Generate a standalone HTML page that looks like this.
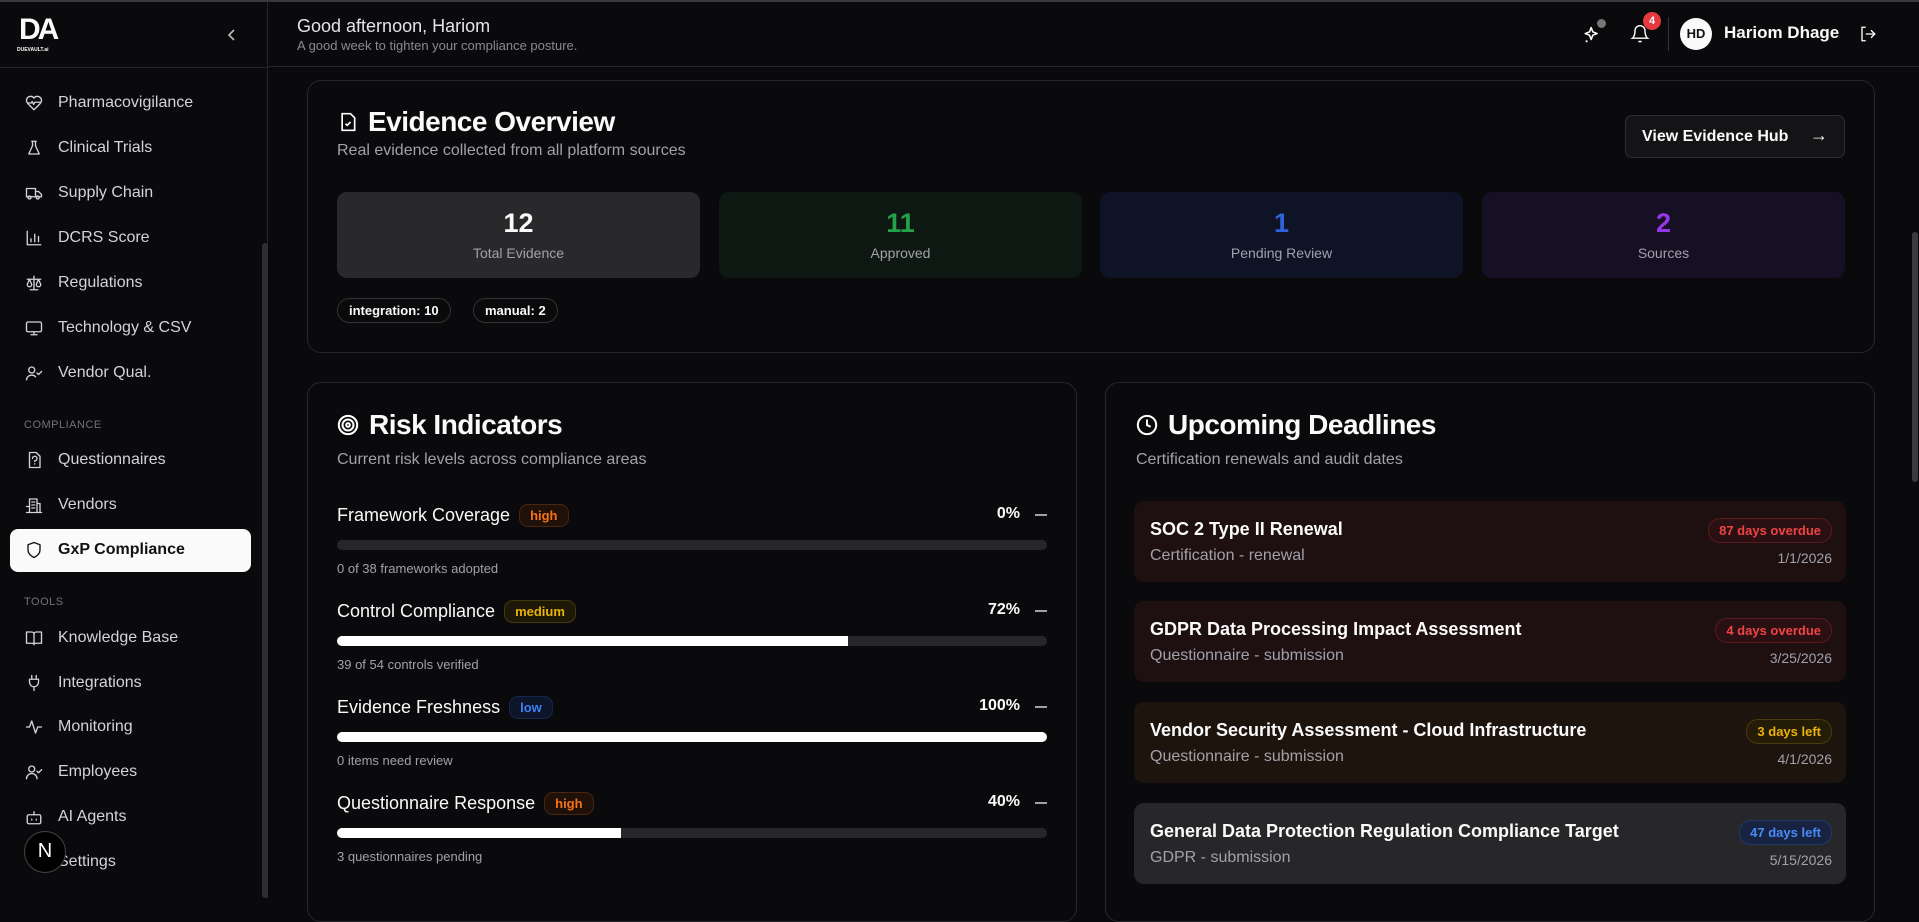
<!DOCTYPE html>
<html><head><meta charset="utf-8"><style>
*{box-sizing:border-box;margin:0;padding:0}
body{width:1919px;height:898px;overflow:hidden;background:#0a0a0c;font-family:"Liberation Sans",sans-serif;color:#fafafa;position:relative}
.abs{position:absolute}
.side{left:0;top:0;width:268px;height:898px;border-right:1px solid #262628;background:#0a0a0c}
.hdr{left:268px;top:0;right:0;height:67px;border-bottom:1px solid #262628}
.topline{left:0;top:0;width:1919px;height:2px;background:#3a3a3c;z-index:5}
.nav{position:absolute;left:25px;font-size:16px;color:#d4d4d8;display:flex;align-items:center;gap:15px;height:24px}
.nav svg{width:18px;height:18px;stroke:#d4d4d8;fill:none;stroke-width:1.8;stroke-linecap:round;stroke-linejoin:round}
.sec{position:absolute;left:24px;font-size:11px;color:#71717a;letter-spacing:.5px}
.card{position:absolute;border:1px solid #27272a;border-radius:14px;background:#0a0a0c}
.h2{position:absolute;font-size:28px;font-weight:bold;display:flex;align-items:center;gap:10px;letter-spacing:-.5px}
.sub{position:absolute;font-size:16px;color:#a1a1aa}
.stat{position:absolute;top:192px;height:86px;width:363px;border-radius:10px;text-align:center}
.stat b{display:block;font-size:27px;margin-top:16px}
.stat span{display:block;font-size:14px;color:#a1a1aa;margin-top:6px}
.pill{position:absolute;top:298px;height:25px;border:1px solid #333;border-radius:13px;font-size:13px;font-weight:bold;padding:4px 11px}
.ri{position:absolute;left:337px;width:710px}
.ri .t{font-size:18px;display:flex;align-items:center;gap:9px;height:26px}
.badge{font-size:13px;font-weight:bold;border-radius:9px;padding:3px 10px;border:1px solid}
.ri .p{position:absolute;right:27px;top:3px;font-size:16px;font-weight:bold}
.ri .d{position:absolute;right:0;top:12px;width:12px;height:2px;background:#a1a1aa}
.bar{margin-top:12px;height:10px;border-radius:5px;background:#27272a;overflow:hidden}
.bar i{display:block;height:100%;background:#fff}
.ri .s{font-size:13px;color:#a1a1aa;margin-top:11px}
.dl{position:absolute;left:1134px;width:712px;height:81px;border-radius:10px}
.dl .a{position:absolute;left:16px;top:18px;font-size:18px;font-weight:bold;color:#fafafa}
.dl .b{position:absolute;left:16px;top:46px;font-size:16px;color:#a1a1aa}
.dl .c{position:absolute;right:14px;top:17px;font-size:13px;font-weight:bold;border-radius:12px;padding:4px 10px;border:1px solid}
.dl .e{position:absolute;right:14px;top:49px;font-size:14px;color:#a1a1aa}
</style></head><body>
<div class="abs topline"></div>
<div class="abs side">
  <div class="abs" style="left:19px;top:15px;font-weight:900;font-size:30px;letter-spacing:-3px;line-height:30px">DA</div>
  <div class="abs" style="left:17px;top:47px;font-size:5px;font-weight:bold">DUEVAULT.ai</div>
  <svg class="abs" style="left:226px;top:28px" width="12" height="14" viewBox="0 0 12 14"><path d="M8 2L3 7l5 5" stroke="#bbb" stroke-width="1.6" fill="none"/></svg>
  <div class="abs" style="left:0;top:67px;width:268px;height:1px;background:#262628"></div>
  <div class="nav" style="top:91px"><svg viewBox="0 0 24 24"><path d="M19 14c1.5-1.5 3-3.2 3-5.5A5.5 5.5 0 0 0 12 5.5 5.5 5.5 0 0 0 2 8.5c0 2.3 1.5 4 3 5.5l7 7z"/><path d="M3.5 12h5l1-2 2 4 1.5-3h7"/></svg>Pharmacovigilance</div>
  <div class="nav" style="top:136px"><svg viewBox="0 0 24 24"><path d="M9 3h6M10 3v6L5 20h14L14 9V3"/></svg>Clinical Trials</div>
  <div class="nav" style="top:181px"><svg viewBox="0 0 24 24"><path d="M2 6h12v11H2zM14 10h4l4 4v3h-8"/><circle cx="6" cy="18" r="2"/><circle cx="17" cy="18" r="2"/></svg>Supply Chain</div>
  <div class="nav" style="top:226px"><svg viewBox="0 0 24 24"><path d="M3 3v18h18M8 17v-4M13 17V7M18 17v-7"/></svg>DCRS Score</div>
  <div class="nav" style="top:271px"><svg viewBox="0 0 24 24"><path d="M12 3v18M7 21h10M3 7h18M6 7l-3 7a3 3 0 0 0 6 0zM18 7l-3 7a3 3 0 0 0 6 0z"/></svg>Regulations</div>
  <div class="nav" style="top:316px"><svg viewBox="0 0 24 24"><rect x="2" y="4" width="20" height="13" rx="2"/><path d="M8 21h8M12 17v4"/></svg>Technology &amp; CSV</div>
  <div class="nav" style="top:361px"><svg viewBox="0 0 24 24"><circle cx="9" cy="8" r="4"/><path d="M2 21a7 7 0 0 1 12-4M16 12l2 2 4-4"/></svg>Vendor Qual.</div>
  <div class="sec" style="top:419px">COMPLIANCE</div>
  <div class="nav" style="top:448px"><svg viewBox="0 0 24 24"><path d="M6 2h9l5 5v15H6z"/><path d="M10 10a3 3 0 1 1 3 3v1M13 17v.5"/></svg>Questionnaires</div>
  <div class="nav" style="top:493px"><svg viewBox="0 0 24 24"><path d="M6 22V4h10v18M2 22h20M16 10h4v12M2 14h4v8M9 8h4M9 12h4M9 16h4"/></svg>Vendors</div>
  <div class="abs" style="left:10px;top:529px;width:241px;height:43px;background:#fafafa;border-radius:8px"></div>
  <div class="nav" style="top:538px;color:#111;font-weight:bold"><svg viewBox="0 0 24 24" style="stroke:#111"><path d="M12 2l8 3v7c0 5-4 8-8 10-4-2-8-5-8-10V5z"/></svg>GxP Compliance</div>
  <div class="sec" style="top:596px">TOOLS</div>
  <div class="nav" style="top:626px"><svg viewBox="0 0 24 24"><path d="M2 4h7a3 3 0 0 1 3 3v14a2 2 0 0 0-2-2H2zM22 4h-7a3 3 0 0 0-3 3v14a2 2 0 0 1 2-2h8z"/></svg>Knowledge Base</div>
  <div class="nav" style="top:671px"><svg viewBox="0 0 24 24"><path d="M9 2v5M15 2v5M6 7h12v4a6 6 0 0 1-12 0zM12 17v5"/></svg>Integrations</div>
  <div class="nav" style="top:715px"><svg viewBox="0 0 24 24"><path d="M2 12h4l3-8 5 16 3-8h5"/></svg>Monitoring</div>
  <div class="nav" style="top:760px"><svg viewBox="0 0 24 24"><circle cx="9" cy="8" r="4"/><path d="M2 21a7 7 0 0 1 14 0M16 11l2 2 4-4"/></svg>Employees</div>
  <div class="nav" style="top:805px"><svg viewBox="0 0 24 24"><rect x="3" y="9" width="18" height="12" rx="2"/><path d="M12 9V5M9 15v1M15 15v1"/></svg>AI Agents</div>
  <div class="nav" style="top:850px"><svg viewBox="0 0 24 24"><circle cx="12" cy="12" r="3"/></svg>Settings</div>
  <div class="abs" style="left:24px;top:831px;width:42px;height:42px;border-radius:50%;background:#000;border:1.5px solid #444;color:#fff;font-size:20px;text-align:center;line-height:39px">N</div>
  <div class="abs" style="left:262px;top:243px;width:6px;height:655px;background:#2e2e30;border-radius:3px"></div>
</div>
<div class="abs hdr">
  <div class="abs" style="left:29px;top:16px;font-size:18px;color:#e4e4e7">Good afternoon, Hariom</div>
  <div class="abs" style="left:29px;top:38px;font-size:13px;color:#8a8a90">A good week to tighten your compliance posture.</div>
</div>
<svg class="abs" style="left:1582px;top:22px" width="22" height="24" viewBox="0 0 24 24" fill="none" stroke="#fff" stroke-width="1.7" stroke-linejoin="round"><path d="M10 5l1.8 4.7 4.7 1.8-4.7 1.8L10 18l-1.8-4.7L3.5 11.5l4.7-1.8z"/><path d="M5 19v2M4 20h2"/></svg>
<div class="abs" style="left:1597px;top:19px;width:9px;height:9px;border-radius:50%;background:#777"></div>
<svg class="abs" style="left:1630px;top:23px" width="20" height="22" viewBox="0 0 24 24" fill="none" stroke="#fff" stroke-width="1.7"><path d="M6 8a6 6 0 0 1 12 0c0 7 3 9 3 9H3s3-2 3-9M10 21h4"/></svg>
<div class="abs" style="left:1643px;top:12px;width:18px;height:18px;border-radius:50%;background:#e5393d;font-size:11px;font-weight:bold;text-align:center;line-height:18px">4</div>
<div class="abs" style="left:1668px;top:17px;width:1px;height:34px;background:#333"></div>
<div class="abs" style="left:1680px;top:18px;width:32px;height:32px;border-radius:50%;background:#fafafa;color:#111;font-size:13px;font-weight:bold;text-align:center;line-height:32px">HD</div>
<div class="abs" style="left:1724px;top:23px;font-size:17px;font-weight:bold">Hariom Dhage</div>
<svg class="abs" style="left:1859px;top:24px" width="18" height="20" viewBox="0 0 24 24" fill="none" stroke="#fff" stroke-width="1.8"><path d="M9 3H4v18h5M16 7l5 5-5 5M21 12H9"/></svg>

<div class="card" style="left:307px;top:80px;width:1568px;height:273px"></div>
<div class="h2" style="left:338px;top:106px"><svg width="20" height="24" viewBox="0 0 24 24" fill="none" stroke="#fff" stroke-width="2"><path d="M5 2h10l5 5v15H5z"/><path d="M9 14l2 2 4-4"/></svg>Evidence Overview</div>
<div class="sub" style="left:337px;top:142px">Real evidence collected from all platform sources</div>
<div class="abs" style="left:1625px;top:115px;width:220px;height:43px;border:1px solid #2e2e30;border-radius:7px;background:#141416;font-size:16px;font-weight:bold;padding:12px 0 0 16px">View Evidence Hub <span style="position:absolute;right:16px;top:9px;font-size:18px;font-weight:normal">→</span></div>
<div class="stat" style="left:337px;background:#29292c"><b>12</b><span>Total Evidence</span></div>
<div class="stat" style="left:719px;background:#0c1811"><b style="color:#22a249">11</b><span>Approved</span></div>
<div class="stat" style="left:1100px;background:#0e1326"><b style="color:#2f63dc">1</b><span>Pending Review</span></div>
<div class="stat" style="left:1482px;background:#170f23"><b style="color:#9437e6">2</b><span>Sources</span></div>
<div class="pill" style="left:337px">integration: 10</div>
<div class="pill" style="left:473px">manual: 2</div>

<div class="card" style="left:307px;top:382px;width:770px;height:540px"></div>
<div class="h2" style="left:337px;top:409px"><svg width="22" height="22" viewBox="0 0 24 24" fill="none" stroke="#fff" stroke-width="2.2"><circle cx="12" cy="12" r="10"/><circle cx="12" cy="12" r="6"/><circle cx="12" cy="12" r="2"/></svg>Risk Indicators</div>
<div class="sub" style="left:337px;top:451px">Current risk levels across compliance areas</div>
<div class="ri" style="top:502px"><div class="t">Framework Coverage <span class="badge" style="color:#f97316;border-color:#4a2510;background:#1f1109">high</span></div><div class="p">0%</div><div class="d"></div><div class="bar"><i style="width:0"></i></div><div class="s">0 of 38 frameworks adopted</div></div>
<div class="ri" style="top:598px"><div class="t">Control Compliance <span class="badge" style="color:#eab308;border-color:#453a0c;background:#1d1807">medium</span></div><div class="p">72%</div><div class="d"></div><div class="bar"><i style="width:72%"></i></div><div class="s">39 of 54 controls verified</div></div>
<div class="ri" style="top:694px"><div class="t">Evidence Freshness <span class="badge" style="color:#3b82f6;border-color:#16284a;background:#0c1529">low</span></div><div class="p">100%</div><div class="d"></div><div class="bar"><i style="width:100%"></i></div><div class="s">0 items need review</div></div>
<div class="ri" style="top:790px"><div class="t">Questionnaire Response <span class="badge" style="color:#f97316;border-color:#4a2510;background:#1f1109">high</span></div><div class="p">40%</div><div class="d"></div><div class="bar"><i style="width:40%"></i></div><div class="s">3 questionnaires pending</div></div>

<div class="card" style="left:1105px;top:382px;width:770px;height:540px"></div>
<div class="h2" style="left:1136px;top:409px"><svg width="22" height="22" viewBox="0 0 24 24" fill="none" stroke="#fff" stroke-width="2.2"><circle cx="12" cy="12" r="10"/><path d="M12 6v6l4 2"/></svg>Upcoming Deadlines</div>
<div class="sub" style="left:1136px;top:451px">Certification renewals and audit dates</div>
<div class="dl" style="top:501px;background:#1e0f11"><div class="a">SOC 2 Type II Renewal</div><div class="b">Certification - renewal</div><div class="c" style="color:#ef4444;border-color:#5a1a1c;background:#2a1012">87 days overdue</div><div class="e">1/1/2026</div></div>
<div class="dl" style="top:601px;background:#1e0f11"><div class="a">GDPR Data Processing Impact Assessment</div><div class="b">Questionnaire - submission</div><div class="c" style="color:#ef4444;border-color:#5a1a1c;background:#2a1012">4 days overdue</div><div class="e">3/25/2026</div></div>
<div class="dl" style="top:702px;background:#1d140e"><div class="a">Vendor Security Assessment - Cloud Infrastructure</div><div class="b">Questionnaire - submission</div><div class="c" style="color:#eab308;border-color:#4a3c0c;background:#241c07">3 days left</div><div class="e">4/1/2026</div></div>
<div class="dl" style="top:803px;background:#27272a"><div class="a">General Data Protection Regulation Compliance Target</div><div class="b">GDPR - submission</div><div class="c" style="color:#4a8af7;border-color:#1e3a6a;background:#172340">47 days left</div><div class="e">5/15/2026</div></div>

<div class="abs" style="left:1912px;top:232px;width:6px;height:250px;background:#3a3a3c;border-radius:3px"></div>
</body></html>
